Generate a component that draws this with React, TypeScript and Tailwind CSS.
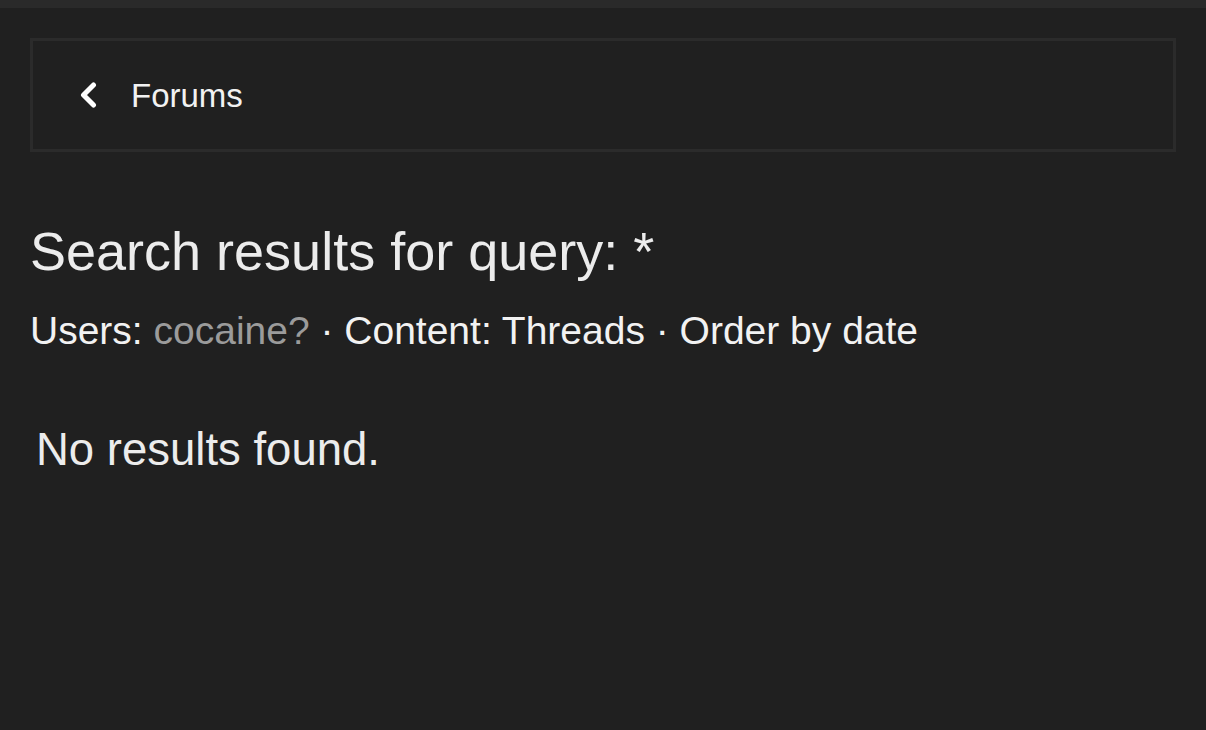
export default function App() {
  return (
    <div className="min-h-[730px] bg-[#202020] font-['Liberation_Sans',Arial,sans-serif] text-[#f2f2f2]">
      <div className="h-2 bg-[#2a2a2a]" />
      <div className="px-[30px]">
        <div className="mt-[30px] flex h-[114px] items-center border-[3px] border-[#2b2b2b] pl-[47px]">
          <svg width="17" height="26" viewBox="0 0 17 26" className="shrink-0">
            <path d="M13.5 3 L3.5 13 L13.5 23" fill="none" stroke="#ffffff" strokeWidth="5" strokeLinecap="round" strokeLinejoin="round" />
          </svg>
          <span className="ml-[34px] text-[33px] leading-none">Forums</span>
        </div>

        <h1 className="mt-[72px] text-[54px] leading-none text-[#ececec]">Search results for query: *</h1>

        <p className="mt-[33px] text-[39px] leading-none">
          Users: <span className="text-[#9b9b9b]">cocaine?</span> · Content: Threads · Order by date
        </p>

        <p className="mt-[77px] pl-[6px] text-[45.5px] leading-none text-[#ececec]">No results found.</p>
      </div>
    </div>
  );
}
